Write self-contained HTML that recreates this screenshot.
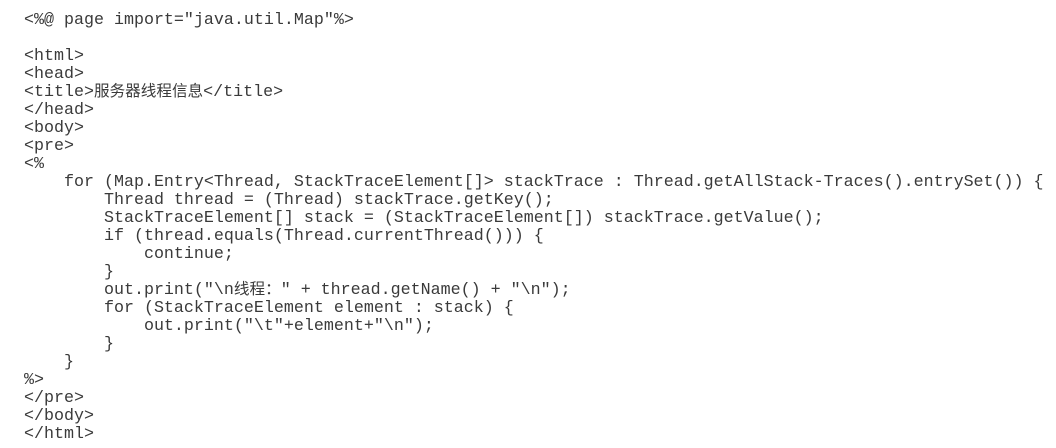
<!DOCTYPE html>
<html><head><meta charset="utf-8"><style>
html,body{margin:0;padding:0;background:#fff;width:1056px;height:448px;overflow:hidden}
.p{position:absolute;left:24px;top:12px;margin:0;font-family:"Liberation Mono",monospace;font-size:16.67px;color:#3a3a3a;}
.p div{height:18px;line-height:18px;white-space:pre;overflow:visible}
.c{font-family:"Noto Sans CJK SC",sans-serif;font-size:15.6px;line-height:18px;vertical-align:top;display:inline-block;height:18px;position:relative;top:-3px}
</style></head><body>
<div class="p">
<div>&lt;%@ page import="java.util.Map"%&gt;</div>
<div> </div>
<div>&lt;html&gt;</div>
<div>&lt;head&gt;</div>
<div>&lt;title&gt;<span class="c">服务器线程信息</span>&lt;/title&gt;</div>
<div>&lt;/head&gt;</div>
<div>&lt;body&gt;</div>
<div>&lt;pre&gt;</div>
<div>&lt;%</div>
<div>    for (Map.Entry&lt;Thread, StackTraceElement[]&gt; stackTrace : Thread.getAllStack-Traces().entrySet()) {</div>
<div>        Thread thread = (Thread) stackTrace.getKey();</div>
<div>        StackTraceElement[] stack = (StackTraceElement[]) stackTrace.getValue();</div>
<div>        if (thread.equals(Thread.currentThread())) {</div>
<div>            continue;</div>
<div>        }</div>
<div>        out.print("\n<span class="c">线程：</span>" + thread.getName() + "\n");</div>
<div>        for (StackTraceElement element : stack) {</div>
<div>            out.print("\t"+element+"\n");</div>
<div>        }</div>
<div>    }</div>
<div>%&gt;</div>
<div>&lt;/pre&gt;</div>
<div>&lt;/body&gt;</div>
<div>&lt;/html&gt;</div>
</div>
</body></html>
